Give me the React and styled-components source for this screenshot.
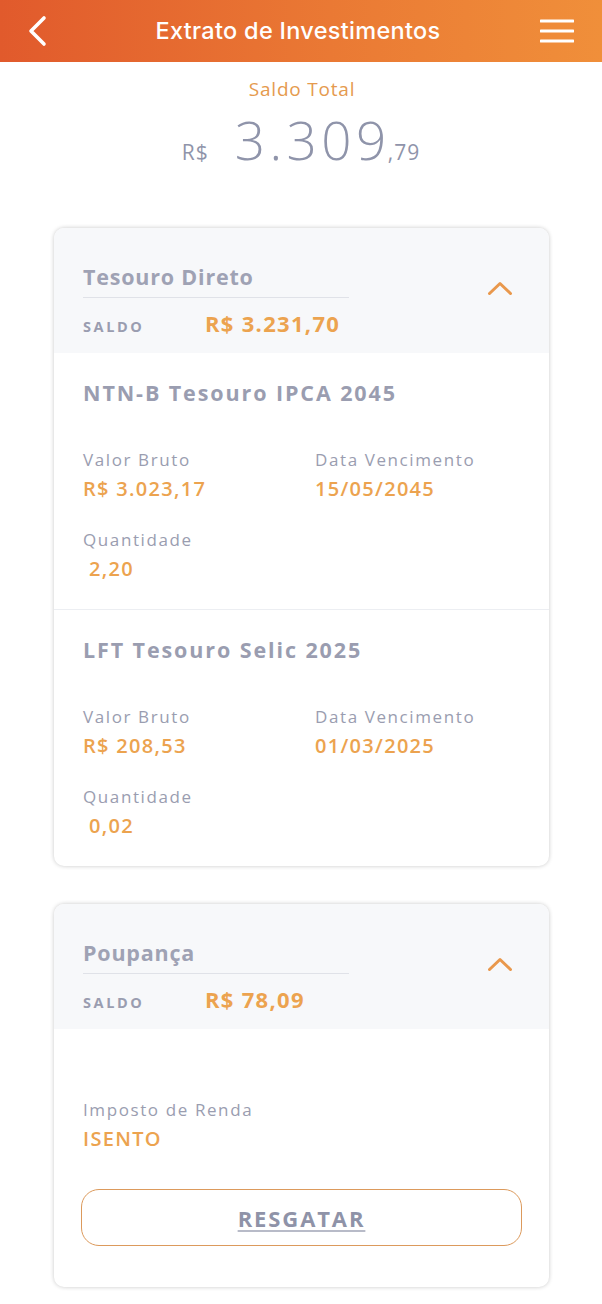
import React from 'react';
import styled, { createGlobalStyle } from 'styled-components';

const GlobalStyle = createGlobalStyle`
  body {
    margin: 0;
    padding: 0;
    background: #ffffff;
    font-family: 'Open Sans', 'Liberation Sans', sans-serif;
  }
`;

const Page = styled.div`
  width: 602px;
  min-height: 1304px;
  background: #ffffff;
  padding-bottom: 16px;
`;

const Header = styled.header`
  height: 62px;
  display: flex;
  align-items: center;
  justify-content: space-between;
  padding: 0 28px 0 26px;
  background: linear-gradient(90deg, #e15a2c 0%, #ea7934 55%, #f08f3a 100%);
  color: #ffffff;
`;

const HeaderTitle = styled.h1`
  margin: 0 0 2px 8px;
  font-family: 'Inter', 'Roboto', sans-serif;
  font-size: 23.5px;
  font-weight: 500;
  letter-spacing: 0.3px;
`;

const IconButton = styled.button`
  border: none;
  background: none;
  padding: 0;
  display: flex;
  align-items: center;
  color: #ffffff;
`;

const Summary = styled.section`
  text-align: center;
  padding-top: 14px;
`;

const SummaryLabel = styled.div`
  font-size: 19px;
  color: #e59a4e;
  letter-spacing: 0.8px;
  margin-left: 2px;
`;

const Amount = styled.div`
  display: flex;
  justify-content: center;
  align-items: baseline;
  color: #8f94aa;
  margin-top: -2px;
`;

const Currency = styled.span`
  font-size: 21px;
  letter-spacing: 1px;
  margin-right: 26px;
`;

const Integer = styled.span`
  font-size: 53px;
  font-weight: 300;
  letter-spacing: 4.5px;
  line-height: 80px;
  margin-right: -3px;
`;

const Cents = styled.span`
  font-size: 21px;
  letter-spacing: 1px;
`;

const CardList = styled.div`
  display: flex;
  flex-direction: column;
  gap: 38px;
  padding: 0 53px 0 54px;
  margin-top: 48px;
`;

const Card = styled.div`
  border-radius: 10px;
  background: #ffffff;
  box-shadow: 0 0 4px rgba(0, 0, 0, 0.22);
  overflow: hidden;
`;

const CardHeader = styled.div`
  background: #f7f8fa;
  padding: 34px 36px 11px 29px;
  display: flex;
  align-items: center;
  justify-content: space-between;
`;

const HeaderInfo = styled.div`
  width: 266px;
`;

const CardTitle = styled.div`
  font-size: 21.5px;
  line-height: 30px;
  font-weight: 700;
  color: #9fa2b4;
  letter-spacing: 0.8px;
  padding-bottom: 5px;
  border-bottom: 1px solid #e0e2e8;
`;

const SaldoRow = styled.div`
  display: flex;
  align-items: baseline;
  margin-top: 10px;
  line-height: 30px;
`;

const SaldoLabel = styled.span`
  width: 122px;
  font-size: 14.5px;
  font-weight: 700;
  color: #9a9db0;
  letter-spacing: 2.6px;
`;

const SaldoValue = styled.span`
  font-size: 22px;
  font-weight: 700;
  color: #eca34f;
  letter-spacing: 1.3px;
  white-space: nowrap;
`;

const Toggle = styled.span`
  display: flex;
  margin-top: -28px;
`;

const Item = styled.div`
  padding: 26px 29px 23px;
  & + & {
    border-top: 1px solid #eceef2;
  }
`;

const ItemTitle = styled.div`
  font-size: 21.5px;
  line-height: 28px;
  font-weight: 700;
  color: #9a9db0;
  letter-spacing: 1.9px;
  margin-bottom: 41px;
`;

const FieldGrid = styled.div`
  display: grid;
  grid-template-columns: 232px 1fr;
  row-gap: 22px;
`;

const Field = styled.div`
  display: flex;
  flex-direction: column;
`;

const FieldLabel = styled.span`
  font-size: 17px;
  color: #9a9db0;
  line-height: 24px;
  letter-spacing: 1.6px;
`;

const FieldValue = styled.span`
  font-size: 20px;
  font-weight: 600;
  color: #eca34f;
  line-height: 34px;
  letter-spacing: 1.3px;
  padding-left: ${p => (p.$indent ? '6px' : '0')};
`;

const PoupancaBody = styled.div`
  padding: 69px 27px 41px 29px;
`;

const RedeemButton = styled.button`
  display: block;
  width: 441px;
  height: 57px;
  margin: 33px 0 0 -2px;
  border: 1.5px solid #dc9a5c;
  border-radius: 18px;
  background: #ffffff;
  font-family: 'Open Sans', 'Liberation Sans', sans-serif;
  font-size: 22px;
  font-weight: 700;
  color: #8f93a8;
  text-decoration: underline;
  text-decoration-color: #b8bbc8;
  text-underline-offset: 3px;
  letter-spacing: 1.9px;
`;

const ChevronUp = () => (
  <svg width="26" height="16" viewBox="0 0 26 16" fill="none">
    <path d="M2.5 13.5 L13 3.5 L23.5 13.5" stroke="#e9984c" strokeWidth="3" strokeLinecap="round" strokeLinejoin="round" />
  </svg>
);

const BackIcon = () => (
  <svg width="22" height="32" viewBox="0 0 22 32" fill="none">
    <path d="M18 3 L5 16 L18 29" stroke="#fff" strokeWidth="3.6" strokeLinecap="round" strokeLinejoin="round" />
  </svg>
);

const MenuIcon = () => (
  <svg width="34" height="26" viewBox="0 0 34 26" fill="none">
    <path d="M1 3 H33 M1 13 H33 M1 23 H33" stroke="#fff" strokeWidth="3" strokeLinecap="round" />
  </svg>
);

const tesouro = [
  { title: 'NTN-B Tesouro IPCA 2045', valor: 'R$ 3.023,17', data: '15/05/2045', qtd: '2,20' },
  { title: 'LFT Tesouro Selic 2025', valor: 'R$ 208,53', data: '01/03/2025', qtd: '0,02' },
];

function AccountHeader({ title, saldo }) {
  return (
    <CardHeader>
      <HeaderInfo>
        <CardTitle>{title}</CardTitle>
        <SaldoRow>
          <SaldoLabel>SALDO</SaldoLabel>
          <SaldoValue>{saldo}</SaldoValue>
        </SaldoRow>
      </HeaderInfo>
      <Toggle><ChevronUp /></Toggle>
    </CardHeader>
  );
}

export default function App() {
  return (
    <Page>
      <GlobalStyle />
      <Header>
        <IconButton aria-label="Voltar"><BackIcon /></IconButton>
        <HeaderTitle>Extrato de Investimentos</HeaderTitle>
        <IconButton aria-label="Menu"><MenuIcon /></IconButton>
      </Header>

      <Summary>
        <SummaryLabel>Saldo Total</SummaryLabel>
        <Amount>
          <Currency>R$</Currency>
          <Integer>3.309</Integer>
          <Cents>,79</Cents>
        </Amount>
      </Summary>

      <CardList>
        <Card>
          <AccountHeader title="Tesouro Direto" saldo="R$ 3.231,70" />
          {tesouro.map(item => (
            <Item key={item.title}>
              <ItemTitle>{item.title}</ItemTitle>
              <FieldGrid>
                <Field>
                  <FieldLabel>Valor Bruto</FieldLabel>
                  <FieldValue>{item.valor}</FieldValue>
                </Field>
                <Field>
                  <FieldLabel>Data Vencimento</FieldLabel>
                  <FieldValue>{item.data}</FieldValue>
                </Field>
                <Field>
                  <FieldLabel>Quantidade</FieldLabel>
                  <FieldValue $indent>{item.qtd}</FieldValue>
                </Field>
              </FieldGrid>
            </Item>
          ))}
        </Card>

        <Card>
          <AccountHeader title="Poupança" saldo="R$ 78,09" />
          <PoupancaBody>
            <Field>
              <FieldLabel>Imposto de Renda</FieldLabel>
              <FieldValue>ISENTO</FieldValue>
            </Field>
            <RedeemButton>RESGATAR</RedeemButton>
          </PoupancaBody>
        </Card>
      </CardList>
    </Page>
  );
}
